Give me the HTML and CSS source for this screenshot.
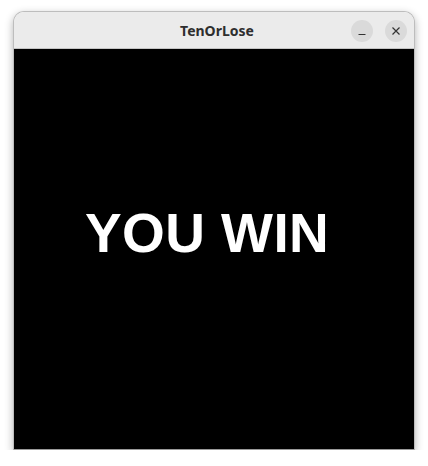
FILE: index.html
```html
<!DOCTYPE html>
<html>
<head>
<meta charset="utf-8">
<link rel="stylesheet" href="styles.css">
</head>
<body>
<div class="window">
  <div class="titlebar">
    <div class="title">TenOrLose</div>
    <div class="controls">
      <div class="btn"><svg width="10" height="10" viewBox="0 0 10 10"><path d="M1.5 8.5h7" stroke="#333" stroke-width="1.2"/></svg></div>
      <div class="btn"><svg width="10" height="10" viewBox="0 0 10 10"><path d="M1.5 1.5l7 7M8.5 1.5l-7 7" stroke="#333" stroke-width="1.2"/></svg></div>
    </div>
  </div>
  <div class="content">
    <div class="message">YOU WIN</div>
  </div>
</div>
</body>
</html>
```
FILE: styles.css
```css
html, body {
  margin: 0;
  padding: 0;
  background: #ffffff;
}
body {
  padding: 11px 0 0 13px;
}
.window {
  width: 400px;
  border: 1px solid #bdbdbd;
  border-bottom: 1px solid #9a9a9a;
  border-radius: 11px 11px 0 0;
  overflow: hidden;
  box-shadow: 0 3px 9px rgba(0,0,0,0.3);
  display: flex;
  flex-direction: column;
}
.titlebar {
  height: 36px;
  background: #ebebeb;
  border-bottom: 1px solid #c4c4c4;
  position: relative;
  display: flex;
  align-items: center;
  justify-content: center;
}
.title {
  font-family: "Noto Sans", sans-serif;
  font-weight: bold;
  font-size: 14px;
  color: #2e2e2e;
  margin-left: 6px;
}
.controls {
  position: absolute;
  right: 7px;
  top: 8px;
  display: flex;
  gap: 12px;
}
.btn {
  width: 22px;
  height: 22px;
  border-radius: 50%;
  background: #dadada;
  display: flex;
  align-items: center;
  justify-content: center;
}
.content {
  height: 400px;
  background: #000000;
  display: flex;
  flex-direction: column;
  align-items: flex-start;
  padding-left: 71px;
  box-sizing: border-box;
  padding-top: 147px;
}
.message {
  font-family: "Liberation Sans", Arial, sans-serif;
  font-weight: 700;
  font-size: 55px;
  letter-spacing: 0.4px;
  line-height: 74px;
  color: #ffffff;
  white-space: nowrap;
}
```
